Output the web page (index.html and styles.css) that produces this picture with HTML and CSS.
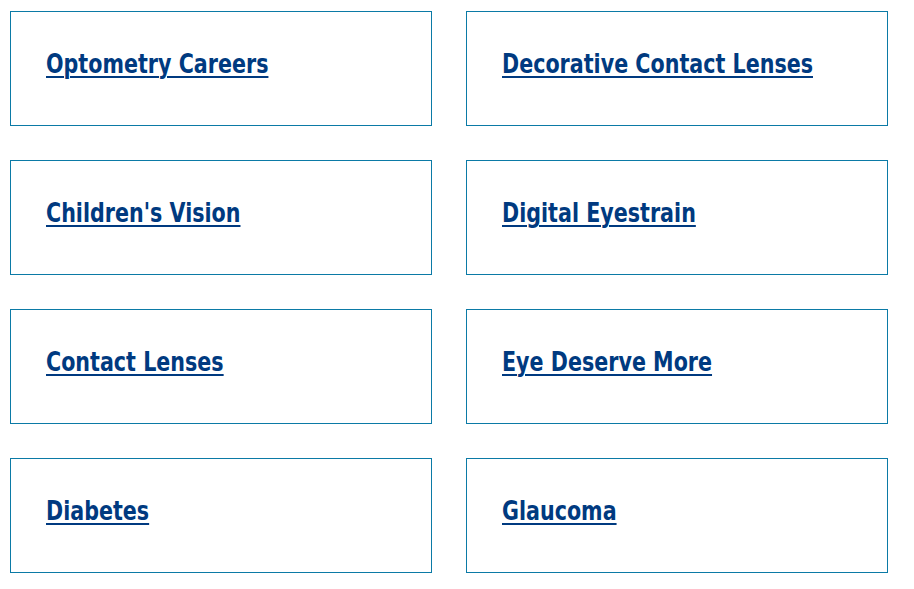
FILE: index.html
```html
<!DOCTYPE html>
<html lang="en">
  <head>
    <meta charset="UTF-8" />
    <title>Topics</title>
    <link rel="stylesheet" href="styles.css">
  </head>
  <body>
    <div class="topics">
      <div class="topic"><a href="#">Optometry Careers</a></div>
      <div class="topic"><a href="#">Decorative Contact Lenses</a></div>
      <div class="topic"><a href="#">Children's Vision</a></div>
      <div class="topic"><a href="#">Digital Eyestrain</a></div>
      <div class="topic"><a href="#">Contact Lenses</a></div>
      <div class="topic"><a href="#">Eye Deserve More</a></div>
      <div class="topic"><a href="#">Diabetes</a></div>
      <div class="topic"><a href="#">Glaucoma</a></div>
    </div>
  </body>
</html>
```

FILE: styles.css
```css
body {
  margin: 0;
  padding: 11px 10px;
  background: white;
  font-family: "DejaVu Sans", sans-serif;
}

.topics {
  display: grid;
  grid-template-columns: 422px 422px;
  grid-auto-rows: 115px;
  gap: 34px;
}

.topic {
  box-sizing: border-box;
  border: 1px solid #0b7aa6;
  padding: 34px 35px 0;
}

/* the original face is a narrow grotesque, so squeeze DejaVu to fit */
.topic a {
  display: inline-block;
  transform: scaleX(0.765);
  transform-origin: left center;
  color: #003a80;
  font-size: 27px;
  font-weight: bold;
  line-height: 36px;
  white-space: nowrap;
  text-decoration: underline;
  text-decoration-thickness: 2px;
  text-underline-offset: 3px;
}
```
